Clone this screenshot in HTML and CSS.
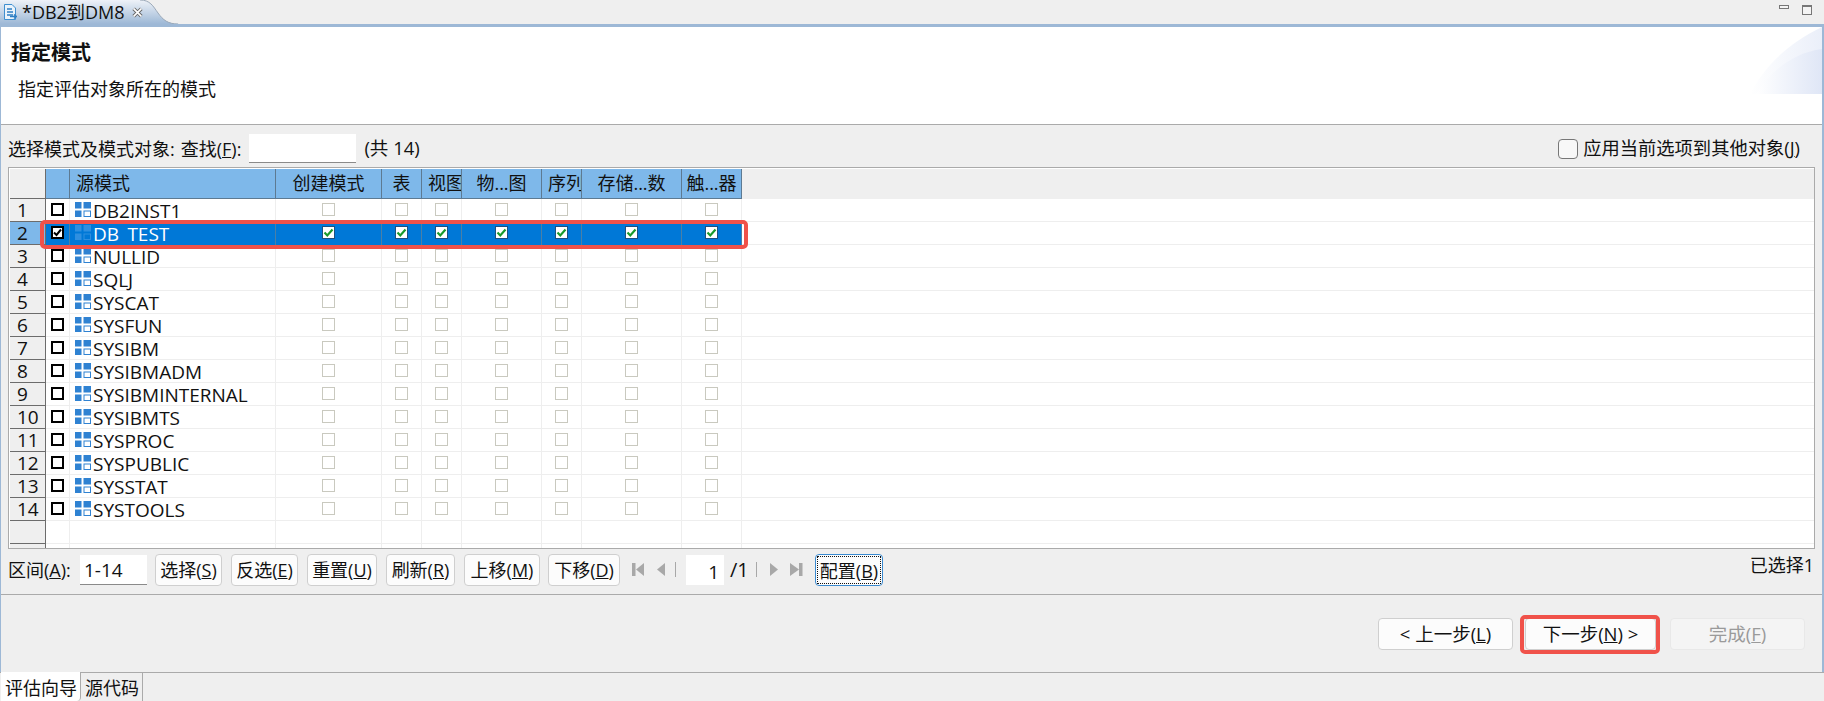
FILE: index.html
```html
<!DOCTYPE html>
<html lang="zh-CN">
<head>
<meta charset="utf-8">
<title>DB2到DM8</title>
<link rel="stylesheet" href="styles.css">
</head>
<body>
<svg class="defs" width="0" height="0" aria-hidden="true">
  <symbol id="schema" viewBox="0 0 16 15">
    <rect x="0" y="0" width="6.500" height="6.500"/><rect x="8.500" y="0" width="7.500" height="6.500"/><rect x="0" y="8.500" width="6.500" height="6.500"/>
    <rect x="9" y="9" width="6.500" height="5.500" fill="none" stroke="currentColor"/>
  </symbol>
  <symbol id="check" viewBox="0 0 11 11">
    <path d="M1.500 5.500 L4.300 8.400 L9.500 2.600" fill="none" stroke="#1a9a2a" stroke-width="2.200"/>
  </symbol>
</svg>
<div class="tabbar">
  <div class="tab">
    <svg class="tab-shape" width="180" height="24" viewBox="0 0 180 24"><defs><linearGradient id="tg" x1="0" y1="0" x2="0" y2="1"><stop offset="0" stop-color="#eef2f8"/><stop offset="1" stop-color="#9db8d6"/></linearGradient></defs><path d="M0 0H140C150 0 153 6 158 13C163 20 168 24 180 24H0Z" fill="url(#tg)"/><path d="M140 0C150 0 153 6 158 13C163 20 168 24 178 24" fill="none" stroke="#9aa8b8"/></svg>
    <svg class="tab-icon" width="14" height="18" viewBox="0 0 14 18"><path d="M1.500 1.500H9L12.500 5V16.500H1.500Z" fill="#eaf3fb" stroke="#3f8fd0"/><path d="M4 6H9M4 9H10M4 12H10" stroke="#2f7fc4" stroke-width="1.300"/><path d="M7 13.500H13M11 11.500L13.500 13.500L11 15.500" fill="none" stroke="#2f7fc4" stroke-width="1.300"/></svg>
    <span class="tab-title">*DB2到DM8</span>
    <svg class="tab-close" width="11" height="11" viewBox="0 0 10 10"><path d="M1.500 1.500L8.500 8.500M8.500 1.500L1.500 8.500" stroke="#666" stroke-width="3.200"/><path d="M1.500 1.500L8.500 8.500M8.500 1.500L1.500 8.500" stroke="#fff" stroke-width="1.500"/></svg>
  </div>
  <div class="win-ctl">
    <span class="win-min"></span>
    <span class="win-max"></span>
  </div>
</div>
<main class="frame">
  <header class="wiz-head">
    <h1 class="wiz-title">指定模式</h1>
    <p class="wiz-desc">指定评估对象所在的模式</p>
    <svg class="wiz-art" width="72" height="67" viewBox="0 0 72 67"><defs><linearGradient id="ag" x1="0" y1="0" x2="1" y2="0"><stop offset="0" stop-color="#fff"/><stop offset="1" stop-color="#dfe6f6"/></linearGradient></defs><path d="M0 67C14 40 38 16 72 0V67Z" fill="url(#ag)" opacity=".65"/><path d="M6 67C20 45 42 26 72 22V67Z" fill="url(#ag)"/></svg>
  </header>
  <section class="body">
    <div class="toolbar">
      <span class="lbl">选择模式及模式对象:</span>
      <span class="lbl find">查找(<u>F</u>):</span>
      <span class="input find-input"></span>
      <span class="lbl total">(共 14)</span>
      <label class="apply"><span class="apply-box"></span>应用当前选项到其他对象(<u>J</u>)</label>
    </div>
    <div class="grid">
      <div class="row head">
        <div class="num"></div><div class="hc"></div>
        <div class="hc left">源模式</div><div class="hc">创建模式</div><div class="hc">表</div><div class="hc clip">视图</div><div class="hc">物...图</div><div class="hc clip">序列</div><div class="hc">存储...数</div><div class="hc">触...器</div>
      </div>
      <div class="row"><div class="num">1</div><div class="c"><i class="mark"></i></div><div class="name"><svg class="schema"><use href="#schema"/></svg>DB2INST1</div><div class="c"><i class="box"></i></div><div class="c"><i class="box"></i></div><div class="c"><i class="box"></i></div><div class="c"><i class="box"></i></div><div class="c"><i class="box"></i></div><div class="c"><i class="box"></i></div><div class="c"><i class="box"></i></div></div>
      <div class="row sel"><div class="num">2</div><div class="c"><i class="mark on"><svg width="9" height="9"><path d="M1 4.500L3.500 7L8 1.500" fill="none" stroke="#000" stroke-width="2"/></svg></i></div><div class="name"><svg class="schema"><use href="#schema"/></svg><span>DB<span class="under">_</span>TEST</span></div><div class="c"><i class="box on"><svg width="11" height="11"><use href="#check"/></svg></i></div><div class="c"><i class="box on"><svg width="11" height="11"><use href="#check"/></svg></i></div><div class="c"><i class="box on"><svg width="11" height="11"><use href="#check"/></svg></i></div><div class="c"><i class="box on"><svg width="11" height="11"><use href="#check"/></svg></i></div><div class="c"><i class="box on"><svg width="11" height="11"><use href="#check"/></svg></i></div><div class="c"><i class="box on"><svg width="11" height="11"><use href="#check"/></svg></i></div><div class="c"><i class="box on"><svg width="11" height="11"><use href="#check"/></svg></i></div></div>
      <div class="row"><div class="num">3</div><div class="c"><i class="mark"></i></div><div class="name"><svg class="schema"><use href="#schema"/></svg>NULLID</div><div class="c"><i class="box"></i></div><div class="c"><i class="box"></i></div><div class="c"><i class="box"></i></div><div class="c"><i class="box"></i></div><div class="c"><i class="box"></i></div><div class="c"><i class="box"></i></div><div class="c"><i class="box"></i></div></div>
      <div class="row"><div class="num">4</div><div class="c"><i class="mark"></i></div><div class="name"><svg class="schema"><use href="#schema"/></svg>SQLJ</div><div class="c"><i class="box"></i></div><div class="c"><i class="box"></i></div><div class="c"><i class="box"></i></div><div class="c"><i class="box"></i></div><div class="c"><i class="box"></i></div><div class="c"><i class="box"></i></div><div class="c"><i class="box"></i></div></div>
      <div class="row"><div class="num">5</div><div class="c"><i class="mark"></i></div><div class="name"><svg class="schema"><use href="#schema"/></svg>SYSCAT</div><div class="c"><i class="box"></i></div><div class="c"><i class="box"></i></div><div class="c"><i class="box"></i></div><div class="c"><i class="box"></i></div><div class="c"><i class="box"></i></div><div class="c"><i class="box"></i></div><div class="c"><i class="box"></i></div></div>
      <div class="row"><div class="num">6</div><div class="c"><i class="mark"></i></div><div class="name"><svg class="schema"><use href="#schema"/></svg>SYSFUN</div><div class="c"><i class="box"></i></div><div class="c"><i class="box"></i></div><div class="c"><i class="box"></i></div><div class="c"><i class="box"></i></div><div class="c"><i class="box"></i></div><div class="c"><i class="box"></i></div><div class="c"><i class="box"></i></div></div>
      <div class="row"><div class="num">7</div><div class="c"><i class="mark"></i></div><div class="name"><svg class="schema"><use href="#schema"/></svg>SYSIBM</div><div class="c"><i class="box"></i></div><div class="c"><i class="box"></i></div><div class="c"><i class="box"></i></div><div class="c"><i class="box"></i></div><div class="c"><i class="box"></i></div><div class="c"><i class="box"></i></div><div class="c"><i class="box"></i></div></div>
      <div class="row"><div class="num">8</div><div class="c"><i class="mark"></i></div><div class="name"><svg class="schema"><use href="#schema"/></svg>SYSIBMADM</div><div class="c"><i class="box"></i></div><div class="c"><i class="box"></i></div><div class="c"><i class="box"></i></div><div class="c"><i class="box"></i></div><div class="c"><i class="box"></i></div><div class="c"><i class="box"></i></div><div class="c"><i class="box"></i></div></div>
      <div class="row"><div class="num">9</div><div class="c"><i class="mark"></i></div><div class="name"><svg class="schema"><use href="#schema"/></svg>SYSIBMINTERNAL</div><div class="c"><i class="box"></i></div><div class="c"><i class="box"></i></div><div class="c"><i class="box"></i></div><div class="c"><i class="box"></i></div><div class="c"><i class="box"></i></div><div class="c"><i class="box"></i></div><div class="c"><i class="box"></i></div></div>
      <div class="row"><div class="num">10</div><div class="c"><i class="mark"></i></div><div class="name"><svg class="schema"><use href="#schema"/></svg>SYSIBMTS</div><div class="c"><i class="box"></i></div><div class="c"><i class="box"></i></div><div class="c"><i class="box"></i></div><div class="c"><i class="box"></i></div><div class="c"><i class="box"></i></div><div class="c"><i class="box"></i></div><div class="c"><i class="box"></i></div></div>
      <div class="row"><div class="num">11</div><div class="c"><i class="mark"></i></div><div class="name"><svg class="schema"><use href="#schema"/></svg>SYSPROC</div><div class="c"><i class="box"></i></div><div class="c"><i class="box"></i></div><div class="c"><i class="box"></i></div><div class="c"><i class="box"></i></div><div class="c"><i class="box"></i></div><div class="c"><i class="box"></i></div><div class="c"><i class="box"></i></div></div>
      <div class="row"><div class="num">12</div><div class="c"><i class="mark"></i></div><div class="name"><svg class="schema"><use href="#schema"/></svg>SYSPUBLIC</div><div class="c"><i class="box"></i></div><div class="c"><i class="box"></i></div><div class="c"><i class="box"></i></div><div class="c"><i class="box"></i></div><div class="c"><i class="box"></i></div><div class="c"><i class="box"></i></div><div class="c"><i class="box"></i></div></div>
      <div class="row"><div class="num">13</div><div class="c"><i class="mark"></i></div><div class="name"><svg class="schema"><use href="#schema"/></svg>SYSSTAT</div><div class="c"><i class="box"></i></div><div class="c"><i class="box"></i></div><div class="c"><i class="box"></i></div><div class="c"><i class="box"></i></div><div class="c"><i class="box"></i></div><div class="c"><i class="box"></i></div><div class="c"><i class="box"></i></div></div>
      <div class="row"><div class="num">14</div><div class="c"><i class="mark"></i></div><div class="name"><svg class="schema"><use href="#schema"/></svg>SYSTOOLS</div><div class="c"><i class="box"></i></div><div class="c"><i class="box"></i></div><div class="c"><i class="box"></i></div><div class="c"><i class="box"></i></div><div class="c"><i class="box"></i></div><div class="c"><i class="box"></i></div><div class="c"><i class="box"></i></div></div>
      <div class="row"><div class="num"></div><div class="c"></div><div class="name"></div><div class="c"></div><div class="c"></div><div class="c"></div><div class="c"></div><div class="c"></div><div class="c"></div><div class="c"></div></div>
      <div class="row"><div class="num"></div><div class="c"></div><div class="name"></div><div class="c"></div><div class="c"></div><div class="c"></div><div class="c"></div><div class="c"></div><div class="c"></div><div class="c"></div></div>
      <div class="mark-row"></div>
    </div>
    <div class="pager">
      <span class="lbl range-lbl">区间(<u>A</u>):</span>
      <span class="input range">1-14</span>
      <button class="btn b-sel">选择(<u>S</u>)</button>
      <button class="btn b-inv">反选(<u>E</u>)</button>
      <button class="btn b-rst">重置(<u>U</u>)</button>
      <button class="btn b-ref">刷新(<u>R</u>)</button>
      <button class="btn b-up">上移(<u>M</u>)</button>
      <button class="btn b-dn">下移(<u>D</u>)</button>
      <svg class="nav" width="174" height="20" viewBox="0 0 174 20"><g fill="#a8a8a8"><rect x="1" y="3" width="3.500" height="13"/><path d="M13 3V16L5 9.500Z"/><path d="M34 3V16L26 9.500Z"/></g><path d="M44.500 2V17M125.500 2V17" stroke="#a8a8a8"/><g fill="#a8a8a8"><path d="M139 3V16L147 9.500Z"/><path d="M159 3V16L168 9.500Z"/><rect x="168" y="3" width="3.500" height="13"/></g></svg>
      <span class="page-total"><span class="page-cur">1</span><span class="page-of">/1</span></span>
      <button class="btn b-cfg"><span class="focus">配置(<u>B</u>)</span></button>
      <span class="count">已选择1</span>
    </div>
    <div class="footer">
      <button class="btn b-wiz">&lt; 上一步(<u>L</u>)</button>
      <button class="btn b-wiz b-next">下一步(<u>N</u>) &gt;</button>
      <button class="btn b-wiz" disabled>完成(<u>F</u>)</button>
    </div>
  </section>
</main>
<nav class="bottom-tabs">
  <span class="btab active">评估向导</span>
  <span class="btab">源代码</span>
</nav>
</body>
</html>
```
FILE: styles.css
```css
* { box-sizing: border-box; }
html, body { margin: 0; padding: 0; height: 100%; overflow: hidden; }
body {
  display: flex; flex-direction: column; height: 701px;
  background: #efefef; color: #111;
  font: 18px/1 "Open Sans", "Noto Sans CJK SC", sans-serif;
}
.defs { position: absolute; }

.tabbar { flex: none; height: 27px; display: flex; justify-content: space-between; border-bottom: 3px solid #9db8d6; }
.tab { position: relative; width: 180px; display: flex; align-items: center; height: 24px; }
.tab-shape { position: absolute; left: 0; top: 0; }
.tab-icon { position: relative; margin-left: 3px; flex: none; }
.tab-title { position: relative; margin-left: 5px; font-size: 18px; line-height: 24px; }
.tab-close { position: relative; margin-left: 8px; }
.win-ctl { display: flex; align-items: flex-start; gap: 13px; padding: 5px 12px 0 0; }
.win-min { width: 10px; height: 4px; border: 1px solid #777; background: #f4f4f4; }
.win-max { width: 10px; height: 10px; border: 1px solid #777; border-top-width: 2px; background: #f4f4f4; }

.frame { flex: none; height: 645px; display: flex; flex-direction: column; border-left: 1px solid #9db8d6; border-right: 2px solid #9db8d6; }
.wiz-head { position: relative; flex: none; height: 98px; background: #fff; border-bottom: 1px solid #aaa; padding: 14px 0 0 10px; }
.wiz-title { margin: 0; font-size: 20px; line-height: 24px; font-weight: 700; }
.wiz-desc { margin: 12px 0 0 7px; font-size: 18px; line-height: 24px; }
.wiz-art { position: absolute; right: 0; top: 0; }

.body { flex: 1; display: flex; flex-direction: column; }
.lbl { white-space: nowrap; }
.toolbar { flex: none; height: 42px; display: flex; align-items: center; padding: 5px 0 0 7px; position: relative; }
.find { margin-left: 6px; }
.input { display: block; background: #fff; border-bottom: 1px solid #8a8a8a; }
.find-input { width: 107px; height: 29px; margin: 0 8px 0 8px; }
.total { font-size: 18.500px; }
.apply { margin-left: auto; margin-right: 22px; display: flex; align-items: center; white-space: nowrap; font-size: 18.300px; }
.apply-box { width: 20px; height: 20px; border: 1px solid #777; border-radius: 4px; background: #f8f8f8; margin-right: 5px; }

.grid { position: relative; flex: none; height: 382px; margin: 0 7px; border: 1px solid #aaa; padding: 1px 0 0 1px; background: #fff; overflow: hidden; }
.row { display: grid; grid-template-columns: 36px 24px 206px 106px 40px 40px 80px 40px 100px 60px; height: 23px; border-bottom: 1px solid #eee; }
.head { height: 30px; background: #efefef; border-bottom: 0; }
.num { background: #efefef; border-right: 1px solid #6c6c6c; border-bottom: 1px solid #6c6c6c; height: 23px; padding-left: 7px; line-height: 23px; font-size: 19px; margin-bottom: -1px; }
.head .num { height: 30px; }
.hc { background: #7eb8ea; border-right: 1px solid #5d7a92; border-bottom: 1px solid #5d7a92; height: 30px; line-height: 29px; text-align: center; white-space: nowrap; overflow: hidden; color: #111; }
.hc.left, .hc.clip { text-align: left; padding-left: 6px; }
.c { display: flex; justify-content: center; align-items: flex-start; padding-top: 4px; border-right: 1px solid #eee; }
.name { display: flex; align-items: center; border-right: 1px solid #eee; padding: 1px 0 0 5px; line-height: 22px; white-space: nowrap; font-size: 19px; }
.schema { width: 16px; height: 15px; margin-right: 2px; color: #2f82d2; fill: currentColor; flex: none; margin-top: -3px; }
.under { color: transparent; }
.box { display: block; width: 13px; height: 13px; border: 1px solid #c9c9bf; background: #fff; }
.box.on { border-color: #1f4f7f; display: flex; align-items: center; justify-content: center; }
.mark { display: block; width: 13px; height: 13px; margin-left: -1px; border: 2.500px solid #000; background: #fff; }
.mark.on { display: flex; align-items: center; justify-content: center; }
.sel .num { background: #7eb8ea; }
.sel .c, .sel .name { background: #0078d7; border-right-color: #4a7fa6; color: #fff; }
.sel .schema { color: #2f8fe0; }
.mark-row { position: absolute; left: 31px; top: 52px; width: 708px; height: 29px; border: 4px solid #f0524a; border-radius: 5px; }

.pager { position: relative; flex: none; height: 46px; display: flex; align-items: center; padding: 0 0 3px 7px; border-bottom: 1px solid #aaa; }
.range-lbl { width: 66px; }
.range { width: 67px; height: 30px; margin-left: 6px; line-height: 30px; padding-left: 4px; font-size: 19px; }
.btn { height: 32px; padding: 0; border: 1px solid #cfcfcf; border-radius: 4px; background: #fcfcfc; font: inherit; color: #111; line-height: 28px; white-space: nowrap; }
.b-sel { width: 67px; margin-left: 8px; }
.b-inv { width: 67px; margin-left: 9px; }
.b-rst { width: 70px; margin-left: 9px; }
.b-ref { width: 69px; margin-left: 9px; }
.b-up { width: 76px; margin-left: 9px; }
.b-dn { width: 72px; margin-left: 8px; }
.nav { flex: none; margin-left: 11px; margin-right: -174px; }
.page-total { display: flex; align-items: center; margin-left: 55px; width: 129px; }
.page-cur { width: 38px; height: 30px; background: #fff; text-align: right; padding-right: 5px; line-height: 34px; font-size: 19px; }
.page-of { margin-left: 6px; font-size: 20px; }
.b-cfg { width: 68px; border-color: #3a8ad0; padding: 1px; }
.focus { display: block; height: 28px; border: 1px dotted #111; }
.count { margin-left: auto; margin-right: 8px; align-self: flex-start; line-height: 20px; margin-top: 6px; }

.footer { flex: 1; display: flex; justify-content: flex-end; align-items: flex-start; padding: 23px 17px 0 0; }
.b-wiz { width: 135px; height: 32px; font-size: 18.500px; }
.b-next { position: relative; width: 131px; margin: 0 14px 0 12px; }
.b-next::after { content: ""; position: absolute; left: -6px; right: -5px; top: -4px; bottom: -5px; border: 4px solid #f0524a; border-radius: 5px; }
.b-wiz:disabled { background: #f4f4f4; border-color: #e8e8e8; color: #9a9a9a; }

.bottom-tabs { flex: none; height: 29px; display: flex; border-top: 1px solid #aaa; padding-left: 1px; }
.btab { padding: 3px 3px 0 4px; font-size: 18px; line-height: 24px; border-right: 1px solid #aaa; }
.btab.active { background: #fff; width: 80px; margin-top: -1px; padding-top: 4px; border-bottom-right-radius: 4px; }
```
